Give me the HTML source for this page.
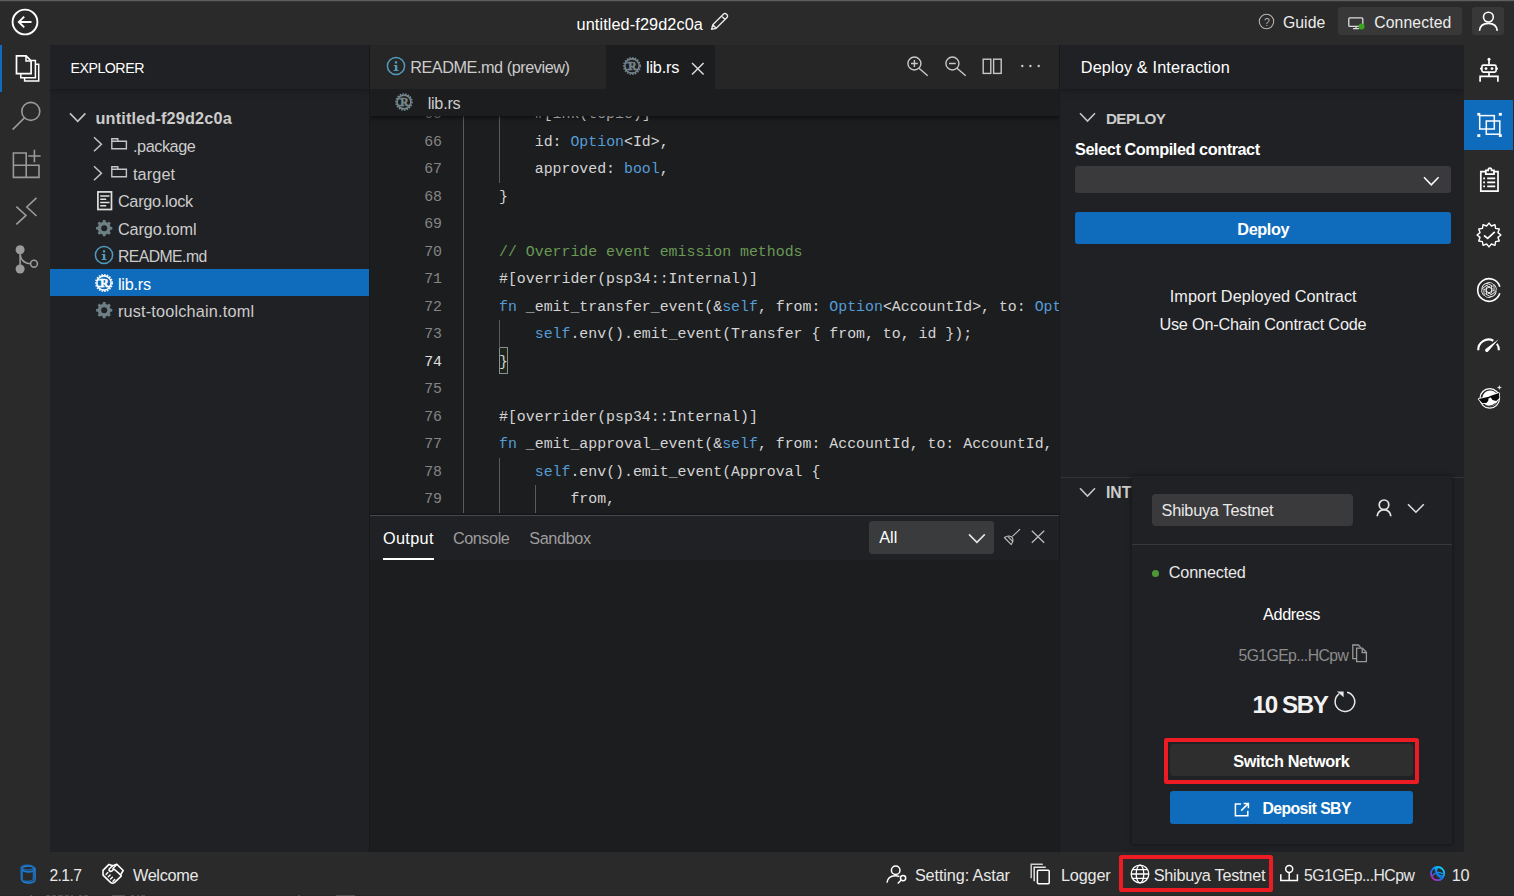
<!DOCTYPE html>
<html lang="en">
<head>
<meta charset="utf-8">
<title>untitled-f29d2c0a</title>
<style>
*{box-sizing:border-box;margin:0;padding:0}
html,body{width:1514px;height:896px;overflow:hidden;background:#2a2a2a}
body{font-family:"Liberation Sans",sans-serif;color:#d6d6d6;position:relative;font-size:16px}
.abs{position:absolute}
.t{position:absolute;white-space:nowrap;line-height:20px;height:20px}
svg{position:absolute;overflow:visible}
#topline{left:0;top:0;width:1514px;height:2px;background:linear-gradient(#5e5e5e 0,#5e5e5e 50%,#343434 50%,#343434 100%)}
#topbar{left:0;top:0;width:1514px;height:45px;background:#2a2a2a}
#actbar{left:0;top:45px;width:50px;height:807px;background:#2a2a2a}
#side{left:50px;top:45px;width:319px;height:807px;background:#202124}
#sidehead{left:0;top:0;width:319px;height:44px;background:#202124;box-shadow:0 2px 6px rgba(0,0,0,.28)}
#sideborder{left:369px;top:45px;width:1px;height:807px;background:#18181a}
#editor{left:370px;top:45px;width:689px;height:470px;background:#1c1d1f}
#tabbar{left:370px;top:45px;width:689px;height:44px;background:#262626}
#tabactive{left:606px;top:45px;width:109px;height:44px;background:#1c1d1f}
#crumb{left:0;top:0;width:690px;height:27px;background:#1c1d1f;box-shadow:0 2px 4px rgba(0,0,0,.5)}
#panel{left:370px;top:515px;width:689px;height:337px;background:#1c1d1f}
#panelhead{left:370px;top:516px;width:689px;height:44.3px;background:#202124}
#panelline{left:370px;top:515px;width:689px;height:1px;background:#48484a}
#right{left:1059px;top:45px;width:405px;height:807px;background:#202124}
#rightborder{left:1059px;top:45px;width:1.4px;height:807px;background:#19191b}
#righthead{left:0;top:0;width:404px;height:44px;background:#202124;box-shadow:0 2px 6px rgba(0,0,0,.28)}
#rbar{left:1464px;top:45px;width:50px;height:807px;background:#2a2a2a}
#rbaractive{left:1464px;top:100px;width:49.2px;height:50px;background:#0f6cbd}
#status{left:0;top:852px;width:1514px;height:44px;background:#2a2a2a}
.code{font-family:"Liberation Mono",monospace;font-size:14.88px;color:#d4d4d4}
.ln{position:absolute;width:40px;text-align:right;left:402px;color:#858585;font-family:"Liberation Mono",monospace;font-size:14.88px;line-height:20px;height:20px}
.cl{position:absolute;white-space:pre;line-height:20px;height:20px;font-family:"Liberation Mono",monospace;font-size:14.88px;color:#d4d4d4}
.k{color:#569cd6}.c{color:#6a9955}
</style>
</head>
<body>
<div class="abs" id="topbar"></div>
<div class="abs" id="topline"></div>
<div class="abs" id="actbar"></div>
<div class="abs" id="side"></div>
<div class="abs" style="left:50px;top:45px;width:319px;height:80px;overflow:hidden"><div class="abs" id="sidehead"></div></div>
<div class="abs" id="sideborder"></div>
<div class="abs" id="editor"></div>
<div class="abs" id="tabbar"></div>
<div class="abs" id="tabactive"></div>
<div class="abs" id="codeclip" style="left:370px;top:100px;width:689px;height:415px;overflow:hidden">
<div class="abs" style="left:128.7px;top:247.0px;width:9px;height:27.2px;border:1px solid #8e8e8e;background:#1b251c"></div>
<div class="ln" style="left:32.0px;top:4.1px;color:#858585">65</div>
<div class="abs" style="left:93.0px;top:0.3px;width:1px;height:27.5px;background:#5a5a5a"></div>
<div class="abs" style="left:129.0px;top:0.3px;width:1px;height:27.5px;background:#5a5a5a"></div>
<div class="cl" style="left:93.3px;top:4.1px">        #[ink(topic)]</div>
<div class="ln" style="left:32.0px;top:31.6px;color:#858585">66</div>
<div class="abs" style="left:93.0px;top:27.8px;width:1px;height:27.5px;background:#5a5a5a"></div>
<div class="abs" style="left:129.0px;top:27.8px;width:1px;height:27.5px;background:#5a5a5a"></div>
<div class="cl" style="left:93.3px;top:31.6px">        id: <span class="k">Option</span>&lt;Id&gt;,</div>
<div class="ln" style="left:32.0px;top:59.1px;color:#858585">67</div>
<div class="abs" style="left:93.0px;top:55.3px;width:1px;height:27.5px;background:#5a5a5a"></div>
<div class="abs" style="left:129.0px;top:55.3px;width:1px;height:27.5px;background:#5a5a5a"></div>
<div class="cl" style="left:93.3px;top:59.1px">        approved: <span class="k">bool</span>,</div>
<div class="ln" style="left:32.0px;top:86.6px;color:#858585">68</div>
<div class="abs" style="left:93.0px;top:82.8px;width:1px;height:27.5px;background:#5a5a5a"></div>
<div class="cl" style="left:93.3px;top:86.6px">    }</div>
<div class="ln" style="left:32.0px;top:114.1px;color:#858585">69</div>
<div class="abs" style="left:93.0px;top:110.3px;width:1px;height:27.5px;background:#5a5a5a"></div>
<div class="ln" style="left:32.0px;top:141.6px;color:#858585">70</div>
<div class="abs" style="left:93.0px;top:137.8px;width:1px;height:27.5px;background:#5a5a5a"></div>
<div class="cl" style="left:93.3px;top:141.6px"><span class="c">    // Override event emission methods</span></div>
<div class="ln" style="left:32.0px;top:169.1px;color:#858585">71</div>
<div class="abs" style="left:93.0px;top:165.4px;width:1px;height:27.5px;background:#5a5a5a"></div>
<div class="cl" style="left:93.3px;top:169.1px">    #[overrider(psp34::Internal)]</div>
<div class="ln" style="left:32.0px;top:196.6px;color:#858585">72</div>
<div class="abs" style="left:93.0px;top:192.9px;width:1px;height:27.5px;background:#5a5a5a"></div>
<div class="cl" style="left:93.3px;top:196.6px">    <span class="k">fn</span> _emit_transfer_event(&amp;<span class="k">self</span>, from: <span class="k">Option</span>&lt;AccountId&gt;, to: <span class="k">Option</span>&lt;AccountId&gt;, id: Id) {</div>
<div class="ln" style="left:32.0px;top:224.1px;color:#858585">73</div>
<div class="abs" style="left:93.0px;top:220.4px;width:1px;height:27.5px;background:#5a5a5a"></div>
<div class="abs" style="left:129.0px;top:220.4px;width:1px;height:27.5px;background:#5a5a5a"></div>
<div class="cl" style="left:93.3px;top:224.1px">        <span class="k">self</span>.env().emit_event(Transfer { from, to, id });</div>
<div class="ln" style="left:32.0px;top:251.6px;color:#e0e0e0">74</div>
<div class="abs" style="left:93.0px;top:247.9px;width:1px;height:27.5px;background:#5a5a5a"></div>
<div class="cl" style="left:93.3px;top:251.6px">    }</div>
<div class="ln" style="left:32.0px;top:279.1px;color:#858585">75</div>
<div class="abs" style="left:93.0px;top:275.4px;width:1px;height:27.5px;background:#5a5a5a"></div>
<div class="ln" style="left:32.0px;top:306.6px;color:#858585">76</div>
<div class="abs" style="left:93.0px;top:302.9px;width:1px;height:27.5px;background:#5a5a5a"></div>
<div class="cl" style="left:93.3px;top:306.6px">    #[overrider(psp34::Internal)]</div>
<div class="ln" style="left:32.0px;top:334.1px;color:#858585">77</div>
<div class="abs" style="left:93.0px;top:330.4px;width:1px;height:27.5px;background:#5a5a5a"></div>
<div class="cl" style="left:93.3px;top:334.1px">    <span class="k">fn</span> _emit_approval_event(&amp;<span class="k">self</span>, from: AccountId, to: AccountId, id: <span class="k">Option</span>&lt;Id&gt;, approved: <span class="k">bool</span>) {</div>
<div class="ln" style="left:32.0px;top:361.6px;color:#858585">78</div>
<div class="abs" style="left:93.0px;top:357.9px;width:1px;height:27.5px;background:#5a5a5a"></div>
<div class="abs" style="left:129.0px;top:357.9px;width:1px;height:27.5px;background:#5a5a5a"></div>
<div class="cl" style="left:93.3px;top:361.6px">        <span class="k">self</span>.env().emit_event(Approval {</div>
<div class="ln" style="left:32.0px;top:389.1px;color:#858585">79</div>
<div class="abs" style="left:93.0px;top:385.4px;width:1px;height:27.5px;background:#5a5a5a"></div>
<div class="abs" style="left:129.0px;top:385.4px;width:1px;height:27.5px;background:#5a5a5a"></div>
<div class="abs" style="left:165.0px;top:385.4px;width:1px;height:27.5px;background:#5a5a5a"></div>
<div class="cl" style="left:93.3px;top:389.1px">            from,</div>
</div>
<div class="abs" style="left:370px;top:89px;width:689px;height:60px;overflow:hidden"><div class="abs" id="crumb"></div></div>
<div class="abs" id="panel"></div>
<div class="abs" id="panelhead"></div>
<div class="abs" style="left:370px;top:512.5px;width:689px;height:2.5px;background:linear-gradient(rgba(0,0,0,0),rgba(0,0,0,.4))"></div><div class="abs" id="panelline"></div>
<div class="abs" id="right"></div>
<div class="abs" id="rightborder"></div>
<div class="abs" style="left:1060.4px;top:45px;width:403.6px;height:80px;overflow:hidden"><div class="abs" id="righthead"></div></div>
<div class="abs" id="rbar"></div>
<div class="abs" id="rbaractive"></div>
<div class="abs" id="status"></div>
<svg style="left:11.30px;top:8.20px;" width="28" height="28" viewBox="0 0 28 28" fill="none"><circle cx="14" cy="14" r="12.4" stroke="#fff" stroke-width="1.9"/><path d="M20.5 14H8.2M13.2 8.6L7.8 14l5.4 5.4" stroke="#fff" stroke-width="1.9"/></svg>
<div class="t" style="left:576.50px;top:14.00px;font-size:16.25px;color:#ffffff;letter-spacing:0.108px;">untitled-f29d2c0a</div>
<svg style="left:709.00px;top:12.00px;" width="20" height="20" viewBox="0 0 20 20" fill="none"><path d="M2.6 17.4l1.2-4.6L14.6 2a1.9 1.9 0 0 1 2.7 0l.7.7a1.9 1.9 0 0 1 0 2.7L7.2 16.2z M12.6 4l3.4 3.4M3.8 12.8l3.4 3.4" stroke="#e8e8e8" stroke-width="1.4" stroke-linejoin="round"/></svg>
<svg style="left:1258.20px;top:13.10px;" width="17" height="17" viewBox="0 0 17 17" fill="none"><circle cx="8.5" cy="8.5" r="7.2" stroke="#b4b4b4" stroke-width="1.1"/></svg>
<div class="t" style="left:1263.98px;top:12.00px;font-size:10.50px;color:#b0b0b0;">?</div>
<div class="t" style="left:1283.00px;top:13.00px;font-size:15.75px;color:#ececec;letter-spacing:0.055px;">Guide</div>
<div class="abs" style="left:1338.00px;top:7.00px;width:124.00px;height:28.00px;background:#383838;border-radius:3px"></div>
<svg style="left:1347.50px;top:16.50px;" width="18" height="13" viewBox="0 0 18 13" fill="none"><rect x=".8" y=".8" width="14" height="8.6" rx="1" stroke="#ddd" stroke-width="1.3"/><path d="M5 11.6h6M8 9.6v2" stroke="#ddd" stroke-width="1.2"/><circle cx="13.6" cy="9.6" r="3" fill="#3ca51f"/></svg>
<div class="t" style="left:1374.20px;top:13.00px;font-size:15.75px;color:#ececec;letter-spacing:0.125px;">Connected</div>
<div class="abs" style="left:1472.00px;top:7.00px;width:32.00px;height:28.00px;background:#383838;border-radius:3px"></div>
<svg style="left:1478.00px;top:10.00px;" width="20" height="22" viewBox="0 0 20 22" fill="none"><circle cx="10.400" cy="7.100" r="4.900" stroke="#fff" stroke-width="1.600"/><path d="M1.500 20.800c.4-5 4-7.400 8.900-7.400s8.400 2.400 8.900 7.400" stroke="#fff" stroke-width="1.600"/></svg>

<div class="abs" style="left:0.00px;top:45.00px;width:2.40px;height:47.00px;background:#0f6cbd;"></div>
<svg style="left:14.00px;top:52.80px;" width="28" height="30" viewBox="0 0 28 30" fill="none"><g stroke="#fff" stroke-linejoin="miter"><path d="M2.500 2.800h9.600l5 5v12.800H2.500z" fill="#2a2a2a" stroke-width="1.700"/><path d="M12 2.800v5.200h5" stroke-width="1.500"/><path d="M17.100 7.400h4.300v17.400H6.800v-4.200" stroke-width="1.500"/><path d="M21.400 11.300h3.300v16.700H10.600v-3.200" stroke-width="1.500"/></g></svg>
<svg style="left:10.00px;top:100.00px;" width="34" height="32" viewBox="0 0 34 32" fill="none"><circle cx="20.800" cy="11.400" r="9" stroke="#9a9a9a" stroke-width="1.600"/><path d="M14.400 17.900L2.600 29.600" stroke="#9a9a9a" stroke-width="1.600"/></svg>
<svg style="left:11.00px;top:149.00px;" width="30" height="30" viewBox="0 0 30 30" fill="none"><g stroke="#9a9a9a" stroke-width="1.600"><path d="M2.400 4h12.800v24.400H2.400zM2.400 16.200h25.600v12.200H15.200M28 16.200v12.200"/><path d="M23.400 0.800v12.400M17.200 7h12.400"/></g></svg>
<svg style="left:14.00px;top:196.00px;" width="26" height="30" viewBox="0 0 26 30" fill="none"><g stroke="#9a9a9a" stroke-width="1.600"><path d="M2.300 10.600l9.700 8.800-9.700 8.900"/><path d="M22.500 1.800l-9.700 9.200 9.700 9"/></g></svg>
<svg style="left:12.00px;top:242.00px;" width="30" height="34" viewBox="0 0 30 34" fill="none"><g stroke="#9a9a9a" stroke-width="1.600"><circle cx="8.100" cy="7.800" r="4.500" fill="#9a9a9a" stroke="none"/><circle cx="8.100" cy="27" r="4.500" fill="#9a9a9a" stroke="none"/><circle cx="22" cy="21.700" r="3.400"/><path d="M8.100 8v19M8.100 12c.5 6 4.500 9.400 10.400 9.700"/></g></svg>

<div class="t" style="left:70.40px;top:58.00px;font-size:14.20px;color:#ffffff;letter-spacing:-0.467px;">EXPLORER</div>
<div class="abs" style="left:50.00px;top:269.00px;width:319.00px;height:27.20px;background:#0f6cbd;"></div>
<svg style="left:69.00px;top:112.00px;" width="18" height="11" viewBox="0 0 18 11" fill="none"><path d="M1 1.400l7.700 8 7.700-8" stroke="#c5c5c5" stroke-width="1.600"/></svg>
<div class="t" style="left:95.50px;top:108.00px;font-size:16.25px;color:#cccccc;letter-spacing:0.163px;font-weight:700;">untitled-f29d2c0a</div>
<svg style="left:93.00px;top:136.40px;" width="10" height="16" viewBox="0 0 10 16" fill="none"><path d="M1 1.200l7.400 7-7.400 7" stroke="#c5c5c5" stroke-width="1.500"/></svg>
<svg style="left:110.90px;top:138.10px;" width="17" height="12.5" viewBox="0 0 17 12.5" fill="none"><path d="M.8 10.800V.8h6v2.500h8.600V10.800z M.8 3.300h6" stroke="#c5c5c5" stroke-width="1.400"/></svg>
<div class="t" style="left:133.00px;top:136.00px;font-size:16.25px;color:#cccccc;letter-spacing:-0.456px;">.package</div>
<svg style="left:93.00px;top:164.50px;" width="10" height="16" viewBox="0 0 10 16" fill="none"><path d="M1 1.200l7.400 7-7.400 7" stroke="#c5c5c5" stroke-width="1.500"/></svg>
<svg style="left:110.90px;top:166.00px;" width="17" height="12.5" viewBox="0 0 17 12.5" fill="none"><path d="M.8 10.800V.8h6v2.500h8.600V10.800z M.8 3.300h6" stroke="#c5c5c5" stroke-width="1.400"/></svg>
<div class="t" style="left:133.00px;top:164.00px;font-size:16.25px;color:#cccccc;letter-spacing:0.108px;">target</div>
<svg style="left:96.50px;top:190.80px;" width="16" height="20" viewBox="0 0 16 20" fill="none"><g stroke="#e0e0e0"><rect x=".9" y=".9" width="13.600" height="17.600" stroke-width="1.700"/><path d="M3.200 5h9.300M3.200 8.300h6M3.200 11.500h9.300M3.200 14.700h6" stroke-width="1.600"/></g></svg>
<div class="t" style="left:117.90px;top:191.00px;font-size:16.25px;color:#cccccc;letter-spacing:-0.257px;">Cargo.lock</div>
<svg style="left:94.80px;top:218.80px;" width="18.4" height="18.4" viewBox="0 0 18.4 18.4" fill="none"><path d="M17.30 7.92L17.30 10.48L15.50 10.71L14.72 12.58L15.83 14.02L14.02 15.83L12.58 14.72L10.71 15.50L10.48 17.30L7.92 17.30L7.69 15.50L5.82 14.72L4.38 15.83L2.57 14.02L3.68 12.58L2.90 10.71L1.10 10.48L1.10 7.92L2.90 7.69L3.68 5.82L2.57 4.38L4.38 2.57L5.82 3.68L7.69 2.90L7.92 1.10L10.48 1.10L10.71 2.90L12.58 3.68L14.02 2.57L15.83 4.38L14.72 5.82L15.50 7.69Z M6.17 9.20a3.03 3.03 0 1 0 6.07 0a3.03 3.03 0 1 0 -6.07 0Z" fill="#6d8086" fill-rule="evenodd"/></svg>
<div class="t" style="left:117.90px;top:219.00px;font-size:16.25px;color:#cccccc;letter-spacing:-0.097px;">Cargo.toml</div>
<svg style="left:93.90px;top:244.90px;" width="20" height="20" viewBox="0 0 20 20" fill="none"><circle cx="10" cy="10" r="8.600" stroke="#519aba" stroke-width="1.500"/><path d="M8.900 5.200h2.300v2.300H8.900zM7.700 8.900h3.600v5h1.300v1.200H7.600v-1.200h1.300v-3.800H7.700z" fill="#519aba"/></svg>
<div class="t" style="left:117.90px;top:247.00px;font-size:15.75px;color:#cccccc;letter-spacing:-0.538px;">README.md</div>
<svg style="left:94.00px;top:273.00px;" width="20" height="20" viewBox="0 0 20 20" fill="none"><circle cx="10" cy="10" r="8.25" stroke="#ffffff" stroke-width="1.500" stroke-dasharray="1.500 1.270"/><circle cx="10" cy="10" r="7.10" stroke="#ffffff" stroke-width="1.600"/><text x="10.300" y="13.900" text-anchor="middle" font-family="Liberation Serif,serif" font-weight="700" font-size="11.500" fill="#ffffff" stroke="#ffffff" stroke-width=".5">R</text><path d="M3.600 6.900h5M3.600 13.500h5.500M12.800 13.500h3.600" stroke="#ffffff" stroke-width="1.300"/></svg>
<div class="t" style="left:117.90px;top:274.00px;font-size:16.25px;color:#ffffff;letter-spacing:-0.235px;">lib.rs</div>
<svg style="left:94.80px;top:300.80px;" width="18.4" height="18.4" viewBox="0 0 18.4 18.4" fill="none"><path d="M17.30 7.92L17.30 10.48L15.50 10.71L14.72 12.58L15.83 14.02L14.02 15.83L12.58 14.72L10.71 15.50L10.48 17.30L7.92 17.30L7.69 15.50L5.82 14.72L4.38 15.83L2.57 14.02L3.68 12.58L2.90 10.71L1.10 10.48L1.10 7.92L2.90 7.69L3.68 5.82L2.57 4.38L4.38 2.57L5.82 3.68L7.69 2.90L7.92 1.10L10.48 1.10L10.71 2.90L12.58 3.68L14.02 2.57L15.83 4.38L14.72 5.82L15.50 7.69Z M6.17 9.20a3.03 3.03 0 1 0 6.07 0a3.03 3.03 0 1 0 -6.07 0Z" fill="#6d8086" fill-rule="evenodd"/></svg>
<div class="t" style="left:117.90px;top:301.00px;font-size:16.25px;color:#cccccc;letter-spacing:0.187px;">rust-toolchain.toml</div>

<svg style="left:386.40px;top:55.70px;" width="20" height="20" viewBox="0 0 20 20" fill="none"><circle cx="10" cy="10" r="8.600" stroke="#519aba" stroke-width="1.500"/><path d="M8.900 5.200h2.300v2.300H8.900zM7.700 8.900h3.600v5h1.300v1.200H7.600v-1.200h1.300v-3.800H7.700z" fill="#519aba"/></svg>
<div class="t" style="left:410.20px;top:57.00px;font-size:16.25px;color:#cccccc;letter-spacing:-0.455px;">README.md (preview)</div>
<svg style="left:622.40px;top:56.10px;" width="20" height="20" viewBox="0 0 20 20" fill="none"><circle cx="10" cy="10" r="8.25" stroke="#74858c" stroke-width="1.500" stroke-dasharray="1.500 1.270"/><circle cx="10" cy="10" r="7.10" stroke="#74858c" stroke-width="1.600"/><text x="10.300" y="13.900" text-anchor="middle" font-family="Liberation Serif,serif" font-weight="700" font-size="11.500" fill="#74858c" stroke="#74858c" stroke-width=".5">R</text><path d="M3.600 6.900h5M3.600 13.500h5.500M12.800 13.500h3.600" stroke="#74858c" stroke-width="1.300"/></svg>
<div class="t" style="left:646.00px;top:57.00px;font-size:16.25px;color:#ffffff;letter-spacing:-0.185px;">lib.rs</div>
<svg style="left:691.00px;top:61.50px;" width="14" height="14" viewBox="0 0 14 14" fill="none"><path d="M1 1l11.600 11.600M12.600 1L1 12.600" stroke="#e0e0e0" stroke-width="1.400"/></svg>
<svg style="left:394.00px;top:92.00px;" width="20" height="20" viewBox="0 0 20 20" fill="none"><circle cx="10" cy="10" r="8.05" stroke="#74858c" stroke-width="1.500" stroke-dasharray="1.500 1.270"/><circle cx="10" cy="10" r="6.90" stroke="#74858c" stroke-width="1.600"/><text x="10.300" y="13.900" text-anchor="middle" font-family="Liberation Serif,serif" font-weight="700" font-size="11.500" fill="#74858c" stroke="#74858c" stroke-width=".5">R</text><path d="M3.600 6.900h5M3.600 13.500h5.500M12.800 13.500h3.600" stroke="#74858c" stroke-width="1.300"/></svg>
<div class="t" style="left:427.70px;top:93.00px;font-size:16.25px;color:#cccccc;letter-spacing:-0.268px;">lib.rs</div>
<svg style="left:906.00px;top:55.00px;" width="24" height="24" viewBox="0 0 24 24" fill="none"><circle cx="8.400" cy="8.500" r="6.500" stroke="#c8c8c8" stroke-width="1.400"/><path d="M13 13.200l8.700 7.600M5 8.500h6.800M8.400 5.100v6.800" stroke="#c8c8c8" stroke-width="1.400"/></svg>
<svg style="left:943.60px;top:55.00px;" width="24" height="24" viewBox="0 0 24 24" fill="none"><circle cx="8.400" cy="8.500" r="6.500" stroke="#c8c8c8" stroke-width="1.400"/><path d="M13 13.200l8.700 7.600M5 8.500h6.800" stroke="#c8c8c8" stroke-width="1.400"/></svg>
<svg style="left:982.00px;top:58.00px;" width="21" height="17" viewBox="0 0 21 17" fill="none"><rect x="1.200" y="1.200" width="7.600" height="14.200" stroke="#c8c8c8" stroke-width="1.400"/><rect x="11.600" y="1.200" width="7.600" height="14.200" stroke="#c8c8c8" stroke-width="1.400"/></svg>
<svg style="left:1020.00px;top:64.00px;" width="22" height="4" viewBox="0 0 22 4" fill="none"><circle cx="2.300" cy="2" r="1.200" fill="#c8c8c8"/><circle cx="10.400" cy="2" r="1.200" fill="#c8c8c8"/><circle cx="18.700" cy="2" r="1.200" fill="#c8c8c8"/></svg>

<div class="t" style="left:382.90px;top:528.00px;font-size:16.25px;color:#ffffff;letter-spacing:0.370px;">Output</div>
<div class="abs" style="left:382.90px;top:557.70px;width:51.00px;height:2.50px;background:#ffffff;"></div>
<div class="t" style="left:452.90px;top:528.00px;font-size:16.25px;color:#9d9d9d;letter-spacing:-0.445px;">Console</div>
<div class="t" style="left:529.20px;top:528.00px;font-size:16.25px;color:#9d9d9d;letter-spacing:-0.378px;">Sandbox</div>
<div class="abs" style="left:869.00px;top:521.00px;width:125.10px;height:33.00px;background:#3a3b3d;border-radius:3.500px"></div>
<div class="t" style="left:879.20px;top:527.00px;font-size:16.25px;color:#ffffff;letter-spacing:0.047px;">All</div>
<svg style="left:968.00px;top:533.20px;" width="18" height="11" viewBox="0 0 18 11" fill="none"><path d="M1 1.400l7.900 8 7.900-8" stroke="#e8e8e8" stroke-width="1.500"/></svg>
<svg style="left:1003.00px;top:528.00px;" width="18" height="18" viewBox="0 0 18 18" fill="none"><path d="M17.100 1.200L9.400 8.300M1.400 9.500C6 6.400 13 8.400 8.300 16.600ZM4.400 8.100l5.900 6" stroke="#c0c0c0" stroke-width="1.100" stroke-linejoin="round"/></svg>
<svg style="left:1031.40px;top:530.20px;" width="14" height="14" viewBox="0 0 14 14" fill="none"><path d="M.8 .8l12.400 12M13.200 .8L.8 12.800" stroke="#c0c0c0" stroke-width="1.200"/></svg>

<div class="t" style="left:1080.80px;top:57.00px;font-size:16.25px;color:#ffffff;letter-spacing:0.139px;">Deploy &amp; Interaction</div>
<svg style="left:1079.30px;top:112.40px;" width="18" height="11" viewBox="0 0 18 11" fill="none"><path d="M1 1.200l7.500 7.800 7.500-7.800" stroke="#c5c5c5" stroke-width="1.600"/></svg>
<div class="t" style="left:1105.90px;top:109.00px;font-size:15.25px;color:#cccccc;letter-spacing:-0.534px;font-weight:700;">DEPLOY</div>
<div class="t" style="left:1075.10px;top:139.00px;font-size:16.25px;color:#ffffff;letter-spacing:-0.435px;font-weight:700;">Select Compiled contract</div>
<div class="abs" style="left:1075.00px;top:166.00px;width:376.30px;height:27.00px;background:#3a3a3c;border-radius:3px"></div>
<svg style="left:1422.70px;top:176.00px;" width="17" height="11" viewBox="0 0 17 11" fill="none"><path d="M1 1.200l7.300 7.600 7.300-7.600" stroke="#fff" stroke-width="1.500"/></svg>
<div class="abs" style="left:1075.00px;top:212.00px;width:376.30px;height:32.00px;background:#0f6cbd;border-radius:3px"></div>
<div class="t" style="left:1237.34px;top:219.00px;font-size:16.25px;color:#ffffff;letter-spacing:-0.412px;font-weight:700;">Deploy</div>
<div class="t" style="left:1169.79px;top:286.00px;font-size:16.25px;color:#f0f0f0;letter-spacing:0.073px;">Import Deployed Contract</div>
<div class="t" style="left:1159.40px;top:314.00px;font-size:16.25px;color:#f0f0f0;letter-spacing:-0.201px;">Use On-Chain Contract Code</div>
<div class="abs" style="left:1061.00px;top:476.60px;width:403.00px;height:1.20px;background:#333336;"></div>
<svg style="left:1079.30px;top:486.60px;" width="18" height="11" viewBox="0 0 18 11" fill="none"><path d="M1 1.200l7.500 7.800 7.500-7.800" stroke="#c5c5c5" stroke-width="1.600"/></svg>
<div class="t" style="left:1105.90px;top:483.00px;font-size:15.75px;color:#cccccc;letter-spacing:0.100px;font-weight:700;">INTERACT</div>

<div class="abs" style="left:1132.00px;top:475.50px;width:320.20px;height:368.50px;background:#202124;box-shadow:0 0 5px rgba(0,0,0,.5);border-radius:1px"></div>
<div class="abs" style="left:1152.00px;top:494.00px;width:201.00px;height:32.00px;background:#3a3a3c;border-radius:4px"></div>
<div class="t" style="left:1161.60px;top:500.00px;font-size:16.25px;color:#e8e8e8;letter-spacing:-0.242px;">Shibuya Testnet</div>
<svg style="left:1374.50px;top:499.00px;" width="18" height="18" viewBox="0 0 18 18" fill="none"><circle cx="9" cy="5.800" r="4.800" stroke="#e4e4e4" stroke-width="1.700"/><path d="M2.200 17.200a6.800 6.600 0 0 1 13.600 0" stroke="#e4e4e4" stroke-width="1.800"/></svg>
<svg style="left:1407.30px;top:502.60px;" width="18" height="11" viewBox="0 0 18 11" fill="none"><path d="M1 1.200l7.900 8 7.900-8" stroke="#e0e0e0" stroke-width="1.500"/></svg>
<div class="abs" style="left:1132.00px;top:544.00px;width:320.20px;height:1.10px;background:#38383b;"></div>
<div class="abs" style="left:1151.90px;top:570.10px;width:7.20px;height:7.20px;background:#4f9638;border-radius:50%"></div>
<div class="t" style="left:1168.80px;top:562.00px;font-size:16.25px;color:#e8e8e8;letter-spacing:-0.188px;">Connected</div>
<div class="t" style="left:1262.97px;top:604.00px;font-size:16.25px;color:#ffffff;letter-spacing:-0.359px;">Address</div>
<div class="t" style="left:1238.50px;top:646.00px;font-size:15.75px;color:#8c8c8c;letter-spacing:-0.584px;">5G1GEp...HCpw</div>
<svg style="left:1351.00px;top:643.50px;" width="18" height="19" viewBox="0 0 18 19" fill="none"><g stroke="#9a9a9a" stroke-width="1.300"><path d="M5.600 4.200h5.800l4 4v9.400H5.600z"/><path d="M11.200 4.400v4.200h4"/><path d="M5.400 14.600H1.800V1h5.600l2.400 2.600"/></g></svg>
<div class="t" style="left:1252.60px;top:695.00px;font-size:24.20px;color:#f2f2f2;letter-spacing:-1.400px;font-weight:700;">10 SBY</div>
<svg style="left:1333.00px;top:690.00px;" width="24" height="24" viewBox="0 0 24 24" fill="none"><path d="M14.100 2.150A9.800 9.800 0 1 1 6 3.900" stroke="#e8e8e8" stroke-width="1.500"/><path d="M4 1.500h6.600v5.800z" fill="#e8e8e8"/></svg>
<div class="abs" style="left:1164.20px;top:737.80px;width:255.00px;height:46.30px;background:transparent;border:4.100px solid #ed1c24;border-radius:2.500px"></div>
<div class="abs" style="left:1170.00px;top:744.00px;width:243.00px;height:32.00px;background:#2e2e2e;border-radius:3px"></div>
<div class="t" style="left:1233.14px;top:751.00px;font-size:16.25px;color:#ffffff;letter-spacing:-0.328px;font-weight:700;">Switch Network</div>
<div class="abs" style="left:1170.00px;top:791.00px;width:243.00px;height:33.00px;background:#0f6cbd;border-radius:3px"></div>
<svg style="left:1233.50px;top:802.40px;" width="16" height="15" viewBox="0 0 16 15" fill="none"><g stroke="#fff" stroke-width="1.500"><path d="M7 2H1.400v11.800h12.400V8.800"/><path d="M9.600 1.400h4.800v4.800M14.200 1.600L7.200 8.600"/></g></svg>
<div class="t" style="left:1262.40px;top:799.00px;font-size:15.75px;color:#ffffff;letter-spacing:-0.547px;font-weight:700;">Deposit SBY</div>

<svg style="left:1476.00px;top:56.00px;" width="26" height="28" viewBox="0 0 26 28" fill="none"><g stroke="#fff" stroke-width="1.700"><circle cx="13" cy="3.300" r="1.500" fill="#fff" stroke="none"/><path d="M13 4v4.400"/><rect x="5.900" y="9.100" width="14.200" height="7" rx="1.600"/><path d="M4 12.600h1.600M20.400 12.600H22"/><path d="M4.100 25.800v-5.400h17.800v5.400"/><path d="M13 16.400v3.600"/></g><circle cx="10" cy="12.600" r="1.400" fill="#fff"/><circle cx="16" cy="12.600" r="1.400" fill="#fff"/></svg>
<svg style="left:1476.00px;top:112.00px;" width="27" height="26" viewBox="0 0 27 26" fill="none"><g stroke="#fff" stroke-width="1.500"><rect x="3.700" y="3.600" width="14.600" height="13.400"/><rect x="10.300" y="9" width="13.500" height="13.200"/></g><g fill="#fff"><rect x="1.300" y=".9" width="3" height="2.800"/><rect x="22.800" y=".9" width="3" height="2.800"/><rect x="1.300" y="22.200" width="3" height="2.800"/><rect x="22.800" y="22.200" width="3" height="2.800"/></g></svg>
<svg style="left:1478.00px;top:166.00px;" width="23" height="28" viewBox="0 0 23 28" fill="none"><g stroke="#fff" stroke-width="1.700"><path d="M7.600 5.600H2.800v19.600h17.200V5.600h-4.800"/><path d="M7.800 8.200V4.400h2.400c0-3 3.400-3 3.400 0h2.400v3.800z"/><path d="M9.200 12.400h8M9.200 16.400h8M9.200 20.400h8"/><path d="M5.200 12.400h1.800M5.200 16.400h1.800M5.200 20.400h1.800"/></g></svg>
<svg style="left:1476.10px;top:221.90px;" width="26" height="26" viewBox="0 0 26 26" fill="none"><path d="M13.00 1.10L15.41 4.02L18.95 2.69L19.58 6.42L23.31 7.05L21.98 10.59L24.90 13.00L21.98 15.41L23.31 18.95L19.58 19.58L18.95 23.31L15.41 21.98L13.00 24.90L10.59 21.98L7.05 23.31L6.42 19.58L2.69 18.95L4.02 15.41L1.10 13.00L4.02 10.59L2.69 7.05L6.42 6.42L7.05 2.69L10.59 4.02Z" stroke="#fff" stroke-width="1.400" stroke-linejoin="round"/><path d="M8 13.500l3.700 2.900 7.100-6.500" stroke="#fff" stroke-width="1.700"/></svg>
<svg style="left:1476.00px;top:276.70px;" width="26" height="26" viewBox="0 0 26 26" fill="none"><path d="M23.81 16.30A11.300 11.300 0 1 1 23.81 9.70" stroke="#fff" stroke-width="1.600"/><g transform="rotate(0 13 13) translate(13 13) scale(1.1) translate(-13 -13)"><path d="M10.600 6.800c3.200-1.600 7 0 7 3.600v3.800M15.300 9.200v6.400" stroke="#ececec" stroke-width=".82"/></g><g transform="rotate(60 13 13) translate(13 13) scale(1.1) translate(-13 -13)"><path d="M10.600 6.800c3.200-1.600 7 0 7 3.600v3.800M15.300 9.200v6.400" stroke="#ececec" stroke-width=".82"/></g><g transform="rotate(120 13 13) translate(13 13) scale(1.1) translate(-13 -13)"><path d="M10.600 6.800c3.200-1.600 7 0 7 3.600v3.800M15.300 9.200v6.400" stroke="#ececec" stroke-width=".82"/></g><g transform="rotate(180 13 13) translate(13 13) scale(1.1) translate(-13 -13)"><path d="M10.600 6.800c3.200-1.600 7 0 7 3.600v3.800M15.300 9.200v6.400" stroke="#ececec" stroke-width=".82"/></g><g transform="rotate(240 13 13) translate(13 13) scale(1.1) translate(-13 -13)"><path d="M10.600 6.800c3.200-1.600 7 0 7 3.600v3.800M15.300 9.200v6.400" stroke="#ececec" stroke-width=".82"/></g><g transform="rotate(300 13 13) translate(13 13) scale(1.1) translate(-13 -13)"><path d="M10.600 6.800c3.200-1.600 7 0 7 3.600v3.800M15.300 9.200v6.400" stroke="#ececec" stroke-width=".82"/></g></svg>
<svg style="left:1475.00px;top:334.00px;" width="28" height="20" viewBox="0 0 28 20" fill="none"><path d="M3.250 16.200A10.300 10.300 0 0 1 18.390 6.710M21.880 9.750A10.300 10.300 0 0 1 23.850 16.200" stroke="#fff" stroke-width="2.100"/><path d="M23.600 5.300L13.100 17.400a1.700 1.700 0 0 1-2.500-2.400z" fill="#fff"/></svg>
<svg style="left:1476.00px;top:384.00px;" width="28" height="28" viewBox="0 0 28 28" fill="none"><circle cx="13.700" cy="14.400" r="9.800" stroke="#fff" stroke-width="1.200"/><circle cx="14.200" cy="14.300" r="7.900" fill="#fff"/><path d="M8.400 21.200Q14 24 19.600 19.300" stroke="#3a3a3a" stroke-width="1.100"/><path d="M2.600 15L12.800 12.700l2.200-1L22.900 9l.5 4.900-3.200 3.200-3.700-1.200-1.700-2.400-2.300.9-.3 2.700-2 2-4-.1z" stroke="#fff" stroke-width="1.600" stroke-linejoin="round"/><path d="M2.600 15L12.800 12.700l2.200-1L22.900 9l.5 4.900-3.200 3.200-3.700-1.200-1.700-2.400-2.300.9-.3 2.700-2 2-4-.1z" fill="#0a0a0a"/><path d="M23.400 0.900l.7 1.900 1.900.7-1.900.7-.7 1.900-.7-1.900-1.900-.7 1.900-.7z" fill="#dcdcdc"/></svg>

<svg style="left:20.50px;top:864.50px;" width="15" height="19" viewBox="0 0 15 19" fill="none"><path d="M1 4v11c0 1.600 2.900 3 6.500 3s6.500-1.400 6.500-3V4M1 4c0-1.600 2.900-3 6.500-3S14 2.400 14 4 11.100 7 7.500 7 1 5.600 1 4z" stroke="#1f7fd6" stroke-width="1.500"/></svg>
<div class="t" style="left:49.40px;top:866.00px;font-size:15.62px;color:#e8e8e8;letter-spacing:-0.550px;">2.1.7</div>
<div class="t" style="left:132.90px;top:865.00px;font-size:16.25px;color:#e8e8e8;letter-spacing:-0.304px;">Welcome</div>
<div class="t" style="left:914.90px;top:865.00px;font-size:16.25px;color:#e8e8e8;letter-spacing:-0.118px;">Setting: Astar</div>
<div class="t" style="left:1060.90px;top:865.00px;font-size:16.25px;color:#e8e8e8;letter-spacing:-0.166px;">Logger</div>
<div class="abs" style="left:1119.10px;top:854.90px;width:154.00px;height:37.30px;background:transparent;border:4.200px solid #ed1c24;border-radius:2.500px"></div>
<div class="t" style="left:1153.70px;top:865.00px;font-size:16.25px;color:#e8e8e8;letter-spacing:-0.255px;">Shibuya Testnet</div>
<div class="t" style="left:1304.00px;top:866.00px;font-size:15.75px;color:#e8e8e8;letter-spacing:-0.545px;">5G1GEp...HCpw</div>
<div class="t" style="left:1451.80px;top:865.00px;font-size:16.25px;color:#e8e8e8;letter-spacing:-0.437px;">10</div>
<div class="abs" style="left:0.00px;top:895.00px;width:1514.00px;height:1.00px;background:#252525;"></div>
<div class="abs" style="left:30.00px;top:895.00px;width:2.00px;height:1.00px;background:#4c4c4c;"></div>
<div class="abs" style="left:46.00px;top:895.00px;width:4.00px;height:1.00px;background:#4c4c4c;"></div>
<div class="abs" style="left:52.00px;top:895.00px;width:4.00px;height:1.00px;background:#4c4c4c;"></div>
<div class="abs" style="left:58.00px;top:895.00px;width:5.00px;height:1.00px;background:#4c4c4c;"></div>
<div class="abs" style="left:65.00px;top:895.00px;width:4.00px;height:1.00px;background:#4c4c4c;"></div>
<div class="abs" style="left:71.00px;top:895.00px;width:2.00px;height:1.00px;background:#4c4c4c;"></div>
<div class="abs" style="left:79.00px;top:895.00px;width:3.00px;height:1.00px;background:#4c4c4c;"></div>
<div class="abs" style="left:84.00px;top:895.00px;width:4.00px;height:1.00px;background:#4c4c4c;"></div>
<div class="abs" style="left:112.00px;top:895.00px;width:13.00px;height:1.00px;background:#4c4c4c;"></div>
<div class="abs" style="left:131.00px;top:895.00px;width:3.00px;height:1.00px;background:#4c4c4c;"></div>
<div class="abs" style="left:137.00px;top:895.00px;width:2.00px;height:1.00px;background:#4c4c4c;"></div>
<div class="abs" style="left:141.00px;top:895.00px;width:4.00px;height:1.00px;background:#4c4c4c;"></div>
<div class="abs" style="left:298.00px;top:895.00px;width:2.00px;height:1.00px;background:#4c4c4c;"></div>
<div class="abs" style="left:336.00px;top:895.00px;width:19.00px;height:1.00px;background:#4c4c4c;"></div>
<svg style="left:20.40px;top:864.40px;" width="16" height="19" viewBox="0 0 16 19" fill="none"><path d="M1.100 3.600v11.200c0 1.400 2.700 2.500 6.100 2.500s6.100-1.100 6.100-2.500V3.600M1.100 3.600c0-1.400 2.700-2.500 6.100-2.500s6.100 1.100 6.100 2.500-2.700 2.500-6.100 2.500S1.100 5 1.100 3.600z" stroke="#1b6ec2" stroke-width="1.200"/></svg>
<svg style="left:101.50px;top:863.00px;" width="23" height="21" viewBox="0 0 23 21" fill="none"><g stroke="#fff" stroke-width="1.600" stroke-linejoin="round" stroke-linecap="round"><path d="M1 7.400L7 1.400l3.600 1.300 4.200-1.400 6.400 6.200-2.600 4.400.6 1.200-6.500 6.300c-1.200 1-3 1-4.200 0L1 12.100z"/><path d="M10.600 2.700L7.200 6c-.8 1.600 1.200 3.200 2.800 1.800l1.900-1.800 7 6.200"/><path d="M4 11.400l1.800-1.800M6.300 13.700l1.800-1.800M8.600 16l1.800-1.800M11 18.200l1.700-1.700" stroke-width="1.400"/><path d="M14.800 1.500l-4 4" stroke-width="1.200"/></g></svg>
<svg style="left:884.50px;top:864.00px;" width="23" height="21" viewBox="0 0 23 21" fill="none"><g stroke="#fff" stroke-width="1.500"><circle cx="10.700" cy="6.200" r="4.300"/><path d="M2 18.700c.6-5 4-7 8.200-7 1.600 0 3 .3 4.200 1"/><circle cx="18.100" cy="14.100" r="2.600"/><path d="M16.200 16l-3.400 3.600"/></g></svg>
<svg style="left:1030.00px;top:863.00px;" width="21" height="22" viewBox="0 0 21 22" fill="none"><g stroke-width="1.500"><path d="M1.200 15.200V1.200h11.600" stroke="#cfcfcf"/><path d="M4.200 18.200V4.200h11.600" stroke="#e4e4e4"/><rect x="7.400" y="7.200" width="11.800" height="13.600" rx="1" stroke="#fff" fill="#2a2a2a"/></g></svg>
<svg style="left:1129.50px;top:864.40px;" width="20" height="20" viewBox="0 0 20 20" fill="none"><g stroke="#fff" stroke-width="1.300"><circle cx="10" cy="10" r="8.800"/><ellipse cx="10" cy="10" rx="3.800" ry="8.800"/><path d="M1.200 10h17.600M2.400 5.600h15.200M2.400 14.400h15.200"/></g></svg>
<svg style="left:1279.00px;top:864.00px;" width="20" height="19" viewBox="0 0 20 19" fill="none"><g stroke="#fff" stroke-width="1.500"><circle cx="10.200" cy="5.100" r="3.500"/><path d="M10.200 8.600v7.600"/><path d="M1.800 10.200v6.400h16.600v-6.400"/></g></svg>
<svg style="left:1429.00px;top:865.30px;" width="18" height="18" viewBox="0 0 18 18" fill="none"><defs><linearGradient id="ag" gradientUnits="userSpaceOnUse" x1="14.500" y1="2" x2="3" y2="15.500"><stop offset="0" stop-color="#0fe0ff"/><stop offset=".55" stop-color="#0a7cf4"/><stop offset=".8" stop-color="#8a3fd0"/><stop offset="1" stop-color="#ee0a8c"/></linearGradient></defs><circle cx="8.600" cy="8.600" r="6.600" stroke="url(#ag)" stroke-width="1.800"/><g stroke="url(#ag)" stroke-width="1.500"><path d="M8.600 2.400c-2.400 3.400-1.600 8.400 3.600 10.600"/><path d="M14.400 11.200c-4.200.4-8.200-2.600-7.600-8.200"/><path d="M3 11.800c1.800-3.800 6.400-5.800 10.800-2.800"/></g></svg>

</body>
</html>
